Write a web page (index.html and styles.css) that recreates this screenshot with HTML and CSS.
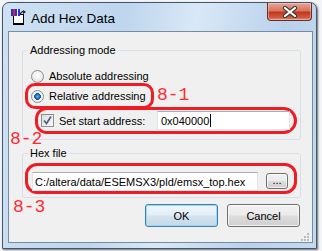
FILE: index.html
```html
<!DOCTYPE html>
<html>
<head>
  <title>Add Hex Data</title>
  <meta name="viewport" content="width=device-width, initial-scale=1">
  <link rel="stylesheet" href="styles.css">
</head>
<body>
  <div class="window">
    <div class="titlebar">
      <svg class="app-icon" width="15" height="16" viewBox="0 0 15 16">
        <rect x="2.5" y="5.5" width="10" height="10" fill="#fff" stroke="#000"/>
        <rect x="2" y="14" width="11" height="2" fill="#000"/>
        <rect x="0" y="0" width="2" height="7" fill="#2233dd"/>
        <rect x="2" y="0" width="2" height="7" fill="#dd2222"/>
        <rect x="4" y="0" width="2" height="7" fill="#2233dd"/>
        <rect x="6" y="0" width="1" height="7" fill="#fff"/>
        <rect x="7" y="0" width="2" height="7" fill="#2233dd"/>
        <path d="M9 6 Q11 1 14 3" fill="none" stroke="#222" stroke-width="1.4"/>
        <path d="M12 1 L15 3 L12 5 Z" fill="#222"/>
      </svg>
      <span class="title">Add Hex Data</span>
      <div class="close">
        <svg width="16" height="12" viewBox="0 0 16 12">
          <path d="M3 2 L13 10 M13 2 L3 10" stroke="#3a3a3a" stroke-width="4.2" stroke-linecap="round"/>
          <path d="M3 2 L13 10 M13 2 L3 10" stroke="#fff" stroke-width="2.2" stroke-linecap="round"/>
        </svg>
      </div>
    </div>

    <div class="client">
      <fieldset class="group group-mode">
        <legend>Addressing mode</legend>
        <label class="radio-row row-abs"><span class="radio"></span>Absolute addressing</label>
        <div class="mark-line">
          <label class="radio-row mark mark-radio"><span class="radio on"></span>Relative addressing</label>
          <span class="note note-1">8-1</span>
        </div>
        <div class="mark mark-start">
          <span class="check">
            <svg width="11" height="11" viewBox="0 0 11 11"><path d="M2 5.5 L4.5 8.5 L9 1.5" fill="none" stroke="#4e6487" stroke-width="1.8"/></svg>
          </span>
          <span class="check-label">Set start address:</span>
          <div class="field field-addr">0x040000<span class="caret"></span></div>
        </div>
      </fieldset>

      <fieldset class="group group-file">
        <legend>Hex file</legend>
        <div class="mark mark-file">
          <div class="field field-path">C:/altera/data/ESEMSX3/pld/emsx_top.hex</div>
          <button class="btn browse">...</button>
        </div>
      </fieldset>

      <div class="actions">
        <button class="btn btn-ok">OK</button>
        <button class="btn">Cancel</button>
      </div>

      <span class="note note-2">8-2</span>
      <span class="note note-3">8-3</span>
      <svg class="grip" width="8" height="8" viewBox="0 0 8 8">
        <g fill="#b9bcc0">
          <rect x="6" y="0" width="2" height="2"/>
          <rect x="3" y="3" width="2" height="2"/><rect x="6" y="3" width="2" height="2"/>
          <rect x="0" y="6" width="2" height="2"/><rect x="3" y="6" width="2" height="2"/><rect x="6" y="6" width="2" height="2"/>
        </g>
      </svg>
    </div>
  </div>
</body>
</html>
```

FILE: styles.css
```css
* { box-sizing: border-box; }
body { margin: 0; width: 322px; height: 251px; overflow: hidden; background: #f2f4f7; font-family: "Liberation Sans", Arial, sans-serif; font-size: 11px; color: #000; }

.window { margin: 2px 0 0 2px; width: 315px; height: 247px; padding: 0 3px 5px 5px; display: flex; flex-direction: column; border: 1px solid #46566a; border-radius: 7px 7px 0 0; background: linear-gradient(100deg, #cfe1f3 0%, #bed6ee 35%, #d9e8f6 55%, #b9d2ec 80%, #c3d9ef 100%); box-shadow: 1px 1px 2px rgba(0,0,0,0.55); }

.titlebar { height: 28px; display: flex; align-items: flex-start; }
.app-icon { margin: 6px 0 0 3px; }
.title { margin: 8px 0 0 5px; font-size: 13.5px; line-height: 15px; color: #000; }
.close { margin-left: auto; margin-right: 1px; width: 45px; height: 18px; display: flex; align-items: center; justify-content: center; border: 1px solid #6b2a22; border-top: none; border-radius: 0 0 4px 4px; background: linear-gradient(#e7a597 0%, #d9745f 45%, #c0391f 55%, #cd5a3f 85%, #e28f73 100%); box-shadow: inset 0 0 0 1px rgba(255,255,255,0.35); }

.client { position: relative; flex: 1; display: flex; flex-direction: column; background: #f0f0f0; border: 1px solid #7a8ba0; }

.group { margin: 0 11px 0 13px; padding: 0 0 5px 0; min-width: 0; border: 1px solid #d5dfe5; border-radius: 3px; }
.group legend { margin-left: 5px; padding: 0 2px; line-height: 14px; }
.group-mode { margin-top: 11px; }
.group-file { margin-top: 6px; padding-bottom: 3px; }

.radio-row { display: flex; align-items: center; gap: 5px; height: 14px; white-space: nowrap; }
.row-abs { margin-top: 12px; padding-left: 8px; }
.radio { flex: none; width: 13px; height: 13px; border-radius: 50%; border: 1px solid #8a8c8e; background: radial-gradient(circle at 50% 40%, #ffffff 0%, #f2f2f2 40%, #d6d7d9 100%); }
.radio.on { background: radial-gradient(circle at 50% 50%, #5bb6f0 0%, #1f6fb8 28%, #16508d 40%, #e8e9eb 46%, #f6f6f6 70%, #d9dadc 100%); }

.mark { border: 3px solid #ee1c24; border-radius: 10px; }
.mark-line { display: flex; align-items: flex-start; }
.mark-radio { margin-left: 2px; width: 129px; height: 26px; padding-left: 3px; gap: 5px; }
.note { font-family: "Liberation Mono", monospace; font-size: 18px; line-height: 18px; color: #ff2a33; }
.note-1 { margin: 3px 0 0 3px; }
.note-2 { position: absolute; left: 1px; top: 98px; }
.note-3 { position: absolute; left: 4px; top: 166px; }

.mark-start { margin: -2px 3px 0 12px; height: 27px; display: flex; align-items: center; padding: 0 4px 0 3px; border-radius: 12px 14px 14px 12px; }
.check { flex: none; width: 13px; height: 13px; display: flex; align-items: center; justify-content: center; border: 1px solid #8f8f8f; background: linear-gradient(135deg, #dcdcdc, #fbfbfb); }
.check-label { margin-left: 5px; white-space: nowrap; }

.field { height: 19px; display: flex; align-items: center; padding-left: 3px; white-space: nowrap; overflow: hidden; background: #fff; border: 1px solid #e2e3ea; border-top-color: #abadb3; }
.field-addr { margin-left: auto; width: 133px; }
.caret { width: 1px; height: 13px; margin-left: 1px; background: #000; }

.mark-file { margin: 3px 3px 0 2px; display: flex; align-items: flex-start; padding: 6px 6px 0 4px; height: 31px; border-radius: 12px; }
.field-path { width: 226px; padding-left: 2px; }
.browse { margin: 1px 0 0 8px; width: 22px; height: 16px; padding: 0 0 3px; font-size: 11px; }

.btn { font-family: "Liberation Sans", Arial, sans-serif; font-size: 11px; color: #000; border: 1px solid #707070; border-radius: 3px; background: linear-gradient(#f2f2f2 0%, #ebebeb 48%, #dddddd 52%, #cfcfcf 100%); box-shadow: inset 0 0 0 1px rgba(255,255,255,0.7); }
.actions { margin-top: 6px; display: flex; justify-content: flex-end; gap: 9px; padding-right: 12px; }
.actions .btn { width: 73px; height: 23px; }
.btn-ok { border-color: #3c7fb1; box-shadow: inset 0 0 0 1px #9ed8f5; background: linear-gradient(#eef6fb 0%, #e3eef6 48%, #d3e2ee 52%, #c6d8e6 100%); }

.grip { position: absolute; right: 3px; bottom: 1px; }
```
